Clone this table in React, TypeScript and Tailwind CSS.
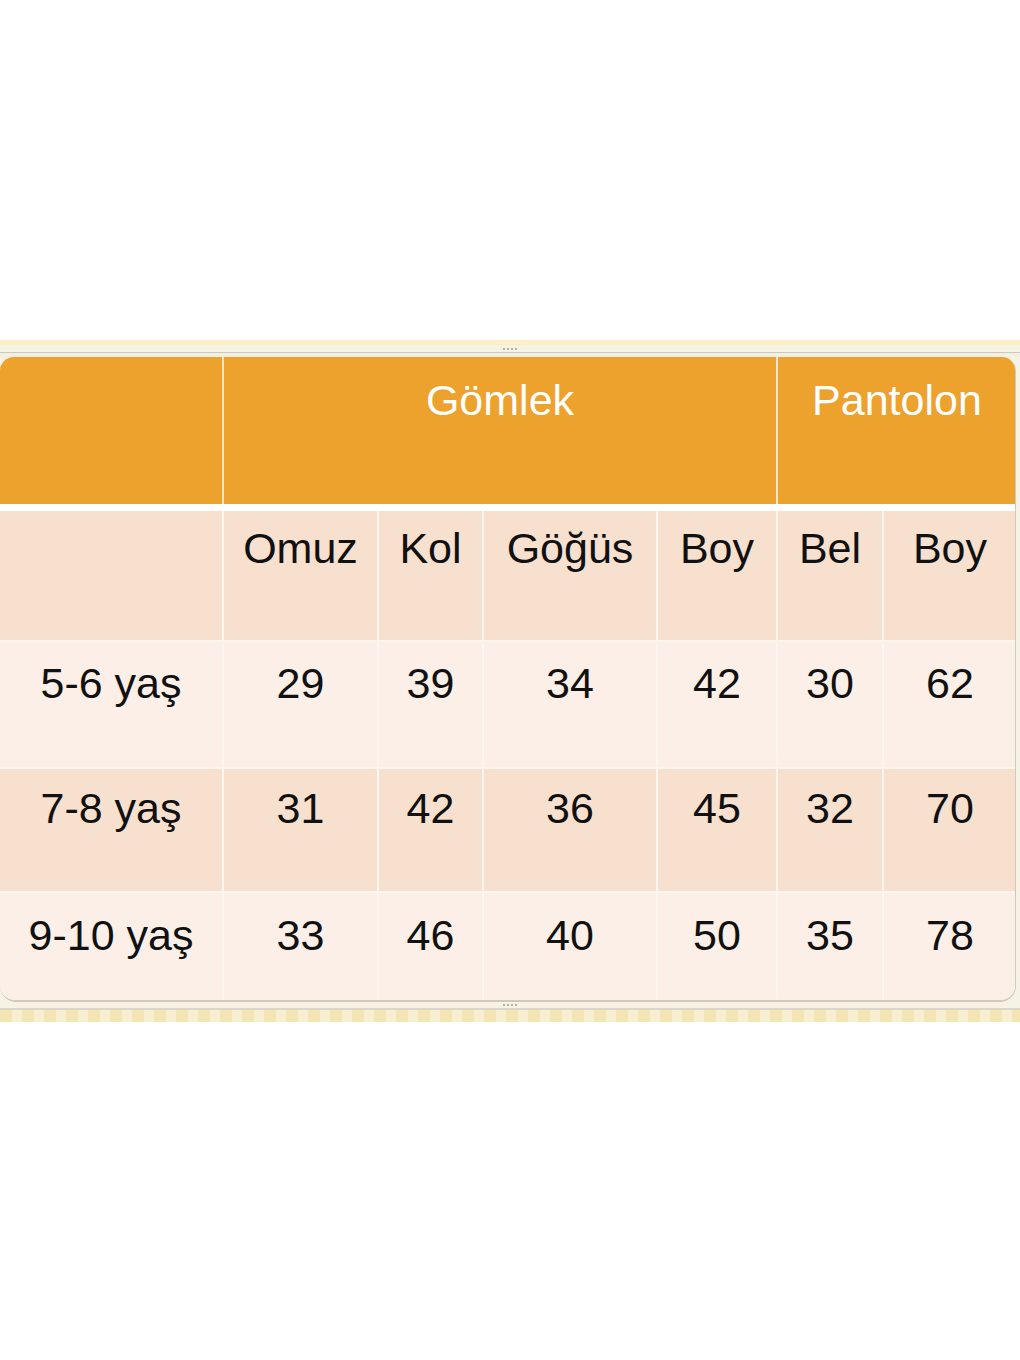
const cols = "grid-cols-[222px_153px_103px_172px_118px_104px_132px]";

const rows = [
  { label: "5-6 yaş", values: ["29", "39", "34", "42", "30", "62"], bg: "bg-[#fcefe7]", h: "h-[125px]", pt: "pt-[20px]" },
  { label: "7-8 yaş", values: ["31", "42", "36", "45", "32", "70"], bg: "bg-[#f8e0cf]", h: "h-[122px]", pt: "pt-[18px]" },
  { label: "9-10 yaş", values: ["33", "46", "40", "50", "35", "78"], bg: "bg-[#fcefe7]", h: "h-[107px]", pt: "pt-[21px]" },
];

const subHeads = ["Omuz", "Kol", "Göğüs", "Boy", "Bel", "Boy"];

function Dots() {
  return (
    <div className="flex justify-center gap-[2px]">
      {[0, 1, 2, 3].map((i) => (
        <span key={i} className="block w-[2px] h-[2px] rounded-full bg-[#9a9a9a]" />
      ))}
    </div>
  );
}

export default function App() {
  return (
    <div className="w-[1020px] h-[1360px] bg-white font-['Liberation_Sans',Arial,sans-serif] text-[43px] leading-none text-[#111]">
      <div className="h-[340px]" />
      {/* frame */}
      <div className="bg-[#f6f2e4]">
        <div className="h-[5px] bg-[#fbefc6]" />
        <div className="h-[7px] pt-[3px]">
          <Dots />
        </div>
        <div className="h-[5px] border-t border-[#cdcabd] bg-[#f3efe2]" />

        <div className="w-[1016px] rounded-t-[14px] rounded-b-[16px] overflow-hidden border-b-2 border-r border-[#cfcabd] bg-[#fdf6f0]">
          {/* top header */}
          <div className={`grid ${cols} gap-x-[2px] bg-[#fbe6c4] h-[147px]`}>
            <div className="bg-[#eda22e]" />
            <div className="col-span-4 bg-[#eda22e] text-center text-white pt-[22px]">Gömlek</div>
            <div className="col-span-2 bg-[#eda22e] text-center text-white pt-[22px]">Pantolon</div>
          </div>
          <div className="h-[7px] bg-white" />
          {/* sub header */}
          <div className={`grid ${cols} gap-x-[2px] h-[129px]`}>
            <div className="bg-[#f8e0cf]" />
            {subHeads.map((s, i) => (
              <div key={i} className="bg-[#f8e0cf] text-center pt-[16px]">{s}</div>
            ))}
          </div>
          {rows.map((r) => (
            <div key={r.label} className={`grid ${cols} gap-x-[2px] mt-[2px] ${r.h}`}>
              <div className={`${r.bg} text-center ${r.pt}`}>{r.label}</div>
              {r.values.map((v, i) => (
                <div key={i} className={`${r.bg} text-center ${r.pt}`}>{v}</div>
              ))}
            </div>
          ))}
        </div>

        <div className="h-[6px] pt-[2px]">
          <Dots />
        </div>
        <div className="h-[14px] border-t-2 border-[#dcd6c4] bg-[repeating-linear-gradient(90deg,#f4e6b4_0px,#f4e6b4_12px,#f8eed2_12px,#f8eed2_22px)]" />
      </div>
    </div>
  );
}
